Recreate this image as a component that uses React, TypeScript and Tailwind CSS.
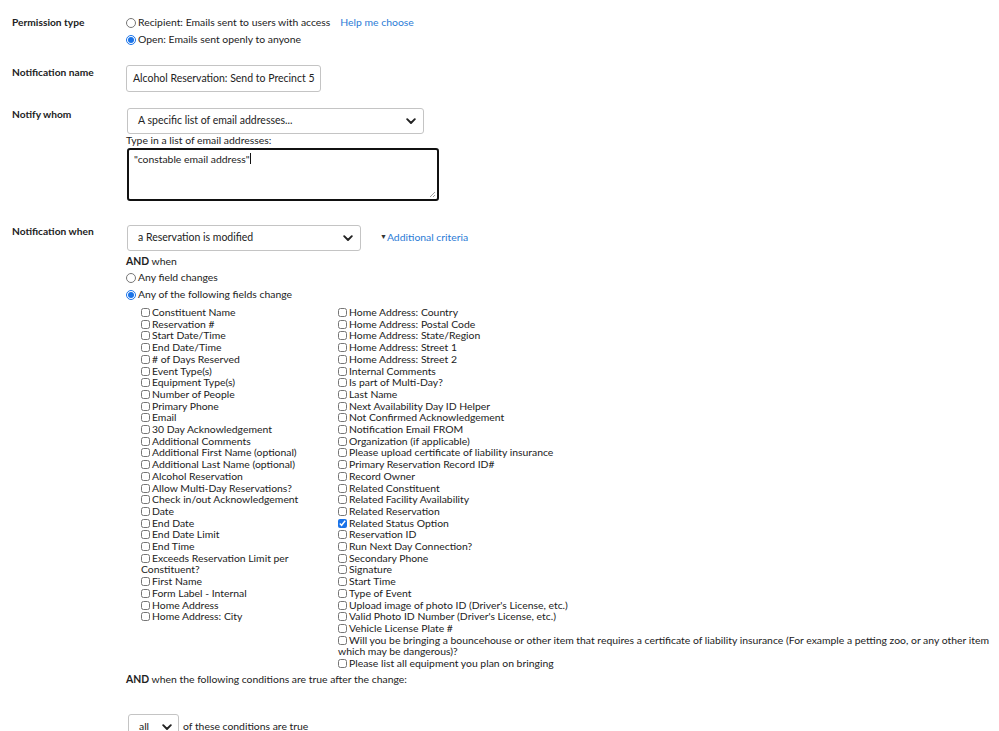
import React from 'react';

const leftFields = [
  'Constituent Name', 'Reservation #', 'Start Date/Time', 'End Date/Time', '# of Days Reserved', 'Event Type(s)',
  'Equipment Type(s)', 'Number of People', 'Primary Phone', 'Email', '30 Day Acknowledgement', 'Additional Comments',
  'Additional First Name (optional)', 'Additional Last Name (optional)', 'Alcohol Reservation', 'Allow Multi-Day Reservations?',
  'Check in/out Acknowledgement', 'Date', 'End Date', 'End Date Limit', 'End Time', 'Exceeds Reservation Limit per Constituent?',
  'First Name', 'Form Label - Internal', 'Home Address', 'Home Address: City',
];

const rightFields = [
  'Home Address: Country', 'Home Address: Postal Code', 'Home Address: State/Region', 'Home Address: Street 1',
  'Home Address: Street 2', 'Internal Comments', 'Is part of Multi-Day?', 'Last Name', 'Next Availability Day ID Helper',
  'Not Confirmed Acknowledgement', 'Notification Email FROM', 'Organization (if applicable)',
  'Please upload certificate of liability insurance', 'Primary Reservation Record ID#', 'Record Owner', 'Related Constituent',
  'Related Facility Availability', 'Related Reservation', 'Related Status Option', 'Reservation ID', 'Run Next Day Connection?',
  'Secondary Phone', 'Signature', 'Start Time', 'Type of Event', "Upload image of photo ID (Driver's License, etc.)",
  "Valid Photo ID Number (Driver's License, etc.)", 'Vehicle License Plate #',
  'Will you be bringing a bouncehouse or other item that requires a certificate of liability insurance (For example a petting zoo, or any other item which may be dangerous)?',
  'Please list all equipment you plan on bringing',
];

const font = { fontFamily: 'Lato, "Noto Sans", sans-serif' };

function Chevron() {
  return (
    <svg width="10" height="7" viewBox="0 0 10 7" className="shrink-0">
      <path d="M1.2 1.2 5 5 8.8 1.2" fill="none" stroke="#222" strokeWidth="1.9" strokeLinecap="round" strokeLinejoin="round" />
    </svg>
  );
}

function Select({ text, w }: { text: string; w: string }) {
  return (
    <div className={`${w} h-[26px] border border-[#c4c4c4] rounded-[3px] bg-white flex items-center justify-between pl-[10px] pr-[7px] text-[10.5px] text-[#222]`}>
      <span>{text}</span>
      <Chevron />
    </div>
  );
}

function Radio({ checked, label }: { checked?: boolean; label: string }) {
  return (
    <label className="flex items-center gap-[2px] h-[17px]">
      <input type="radio" readOnly checked={!!checked} className="w-[10px] h-[10px] m-0 accent-[#1a73e8]" />
      <span>{label}</span>
    </label>
  );
}

function Field({ label, checked }: { label: string; checked?: boolean }) {
  return (
    <div className="leading-[11.7px]">
      <input type="checkbox" readOnly checked={!!checked} className="w-[9px] h-[9px] m-0 mr-[2px] align-[-1px] accent-[#1a73e8]" />
      {label}
    </div>
  );
}

export default function App() {
  return (
    <div className="bg-white w-[999px] h-[731px] overflow-hidden text-[10.4px] text-[#222] pl-[12px] pr-[5px]" style={font}>
      {/* Permission type */}
      <div className="flex pt-[14px]">
        <div className="w-[114px] font-bold text-[10.2px] pt-[1px]">Permission type</div>
        <div>
          <div className="flex items-center">
            <Radio label="Recipient: Emails sent to users with access" />
            <span className="ml-[10px] text-[#2b7bd6]">Help me choose</span>
          </div>
          <Radio checked label="Open: Emails sent openly to anyone" />
        </div>
      </div>

      {/* Notification name */}
      <div className="flex mt-[17px]">
        <div className="w-[114px] font-bold text-[10.2px]">Notification name</div>
        <div className="w-[195px] h-[27px] border border-[#c4c4c4] rounded-[3px] overflow-hidden whitespace-nowrap pl-[6px] flex items-center text-[10.5px]">
          Alcohol Reservation: Send to Precinct 5
        </div>
      </div>

      {/* Notify whom */}
      <div className="flex mt-[16px]">
        <div className="w-[114px] font-bold text-[10.2px] -mt-[1px]">Notify whom</div>
        <div>
          <div className="ml-[1px]"><Select text="A specific list of email addresses..." w="w-[297px]" /></div>
          <div className="leading-[13px] mb-[1px]">Type in a list of email addresses:</div>
          <div className="relative ml-[1px] w-[312px] h-[53px] border-2 border-[#111] rounded-[3px] pl-[5px] pt-[2px]">
            "constable email address"<span className="inline-block w-[1px] h-[11px] bg-[#111] align-[-1px]" />
            <svg width="7" height="7" viewBox="0 0 7 7" className="absolute right-[1px] bottom-[1px]">
              <path d="M6 1 1 6M6 4 4 6" stroke="#888" strokeWidth="0.8" />
            </svg>
          </div>
        </div>
      </div>

      {/* Notification when */}
      <div className="flex mt-[24px]">
        <div className="w-[114px] font-bold text-[10.2px] -mt-[1px]">Notification when</div>
        <div className="flex-1">
          <div className="flex items-center">
            <div className="ml-[1px]"><Select text="a Reservation is modified" w="w-[234px]" /></div>
            <span className="ml-[19px] text-[#2b7bd6]"><span className="text-[7px] align-[2px] text-[#333]">▼</span>Additional criteria</span>
          </div>
          <div className="mt-[3px] leading-[14px]"><b>AND</b> when</div>
          <div className="mt-[1px]">
            <Radio label="Any field changes" />
            <Radio checked label="Any of the following fields change" />
          </div>

          <div className="grid grid-cols-[197px_1fr] pl-[15px] mt-[4px]">
            <div>
              {leftFields.map((f) => <Field key={f} label={f} />)}
            </div>
            <div>
              {rightFields.map((f) => <Field key={f} label={f} checked={f === 'Related Status Option'} />)}
            </div>
          </div>

          <div className="mt-[2px] leading-[14px]"><b>AND</b> when the following conditions are true after the change:</div>

          <div className="flex items-center mt-[28px]">
            <div className="ml-[2px] w-[51px] h-[27px] border border-[#c4c4c4] rounded-[3px] flex items-center justify-between pl-[10px] pr-[6px]">
              <span>all</span>
              <Chevron />
            </div>
            <span className="ml-[4px]">of these conditions are true</span>
          </div>
        </div>
      </div>
    </div>
  );
}
